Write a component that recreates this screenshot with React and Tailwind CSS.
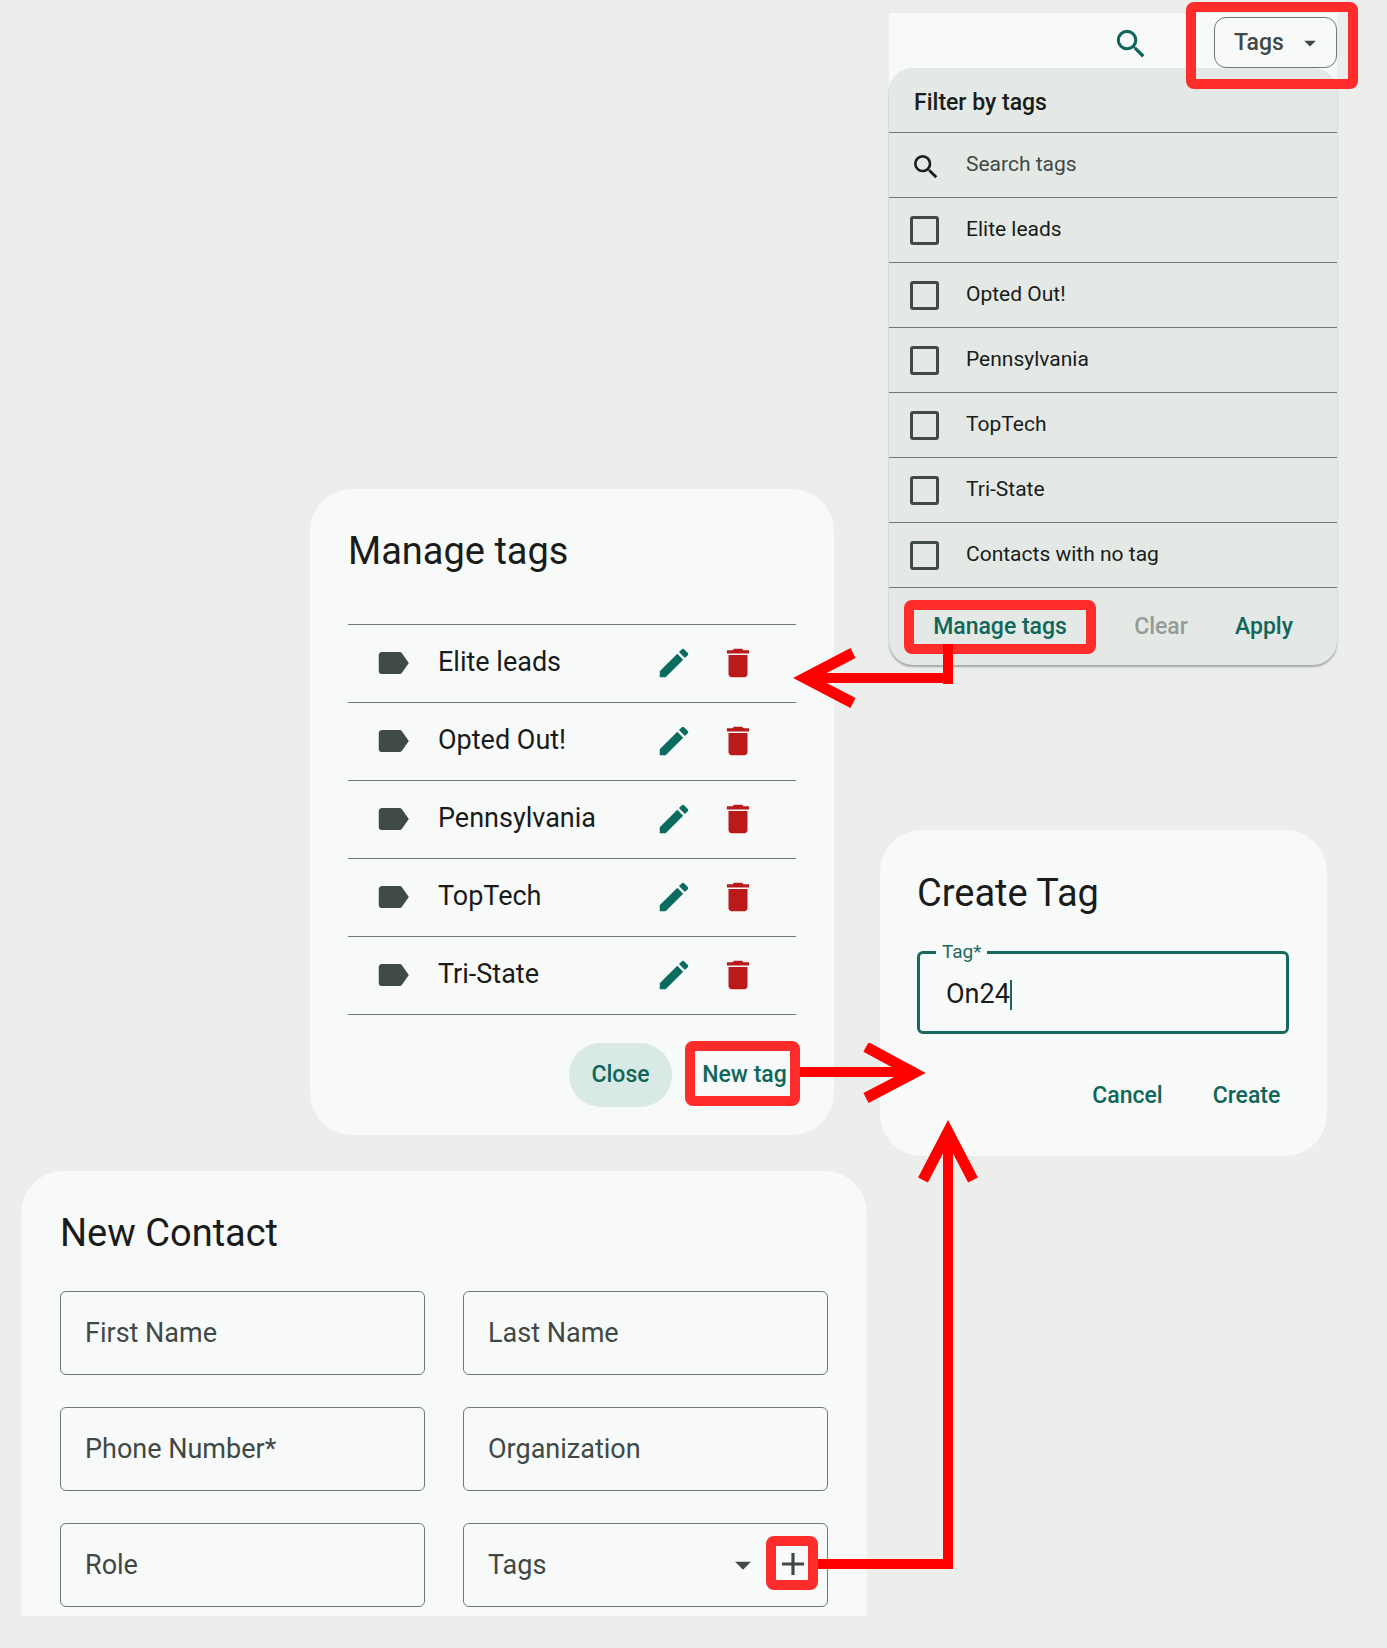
import { useState } from 'react';
import { MdAdd, MdArrowDropDown, MdDelete, MdEdit, MdLabel, MdSearch } from 'react-icons/md';

const TAGS = ['Elite leads', 'Opted Out!', 'Pennsylvania', 'TopTech', 'Tri-State'];

const Highlight = ({ className = 'inset-0' }) => (
  <span aria-hidden="true" className={`absolute pointer-events-none rounded-lg border-10 border-[#ff2c2c] ${className}`} />
);

const Arrow = ({ className, width, height, line, head }) => (
  <svg aria-hidden="true" width={width} height={height} fill="none" stroke="#ff0000" strokeMiterlimit="10" className={`absolute max-w-none pointer-events-none ${className}`}>
    <path d={line} strokeWidth="10" />
    <path d={head} strokeWidth="11" />
  </svg>
);

const TextButton = ({ children, className = '', ...props }) => (
  <button type="button" className={`relative text-[23px] leading-7 font-medium whitespace-nowrap ${className}`} {...props}>
    {children}
  </button>
);

function FilterPanel() {
  const [checked, setChecked] = useState([]);
  const toggle = (tag) =>
    setChecked((prev) => (prev.includes(tag) ? prev.filter((t) => t !== tag) : [...prev, tag]));

  return (
    <section className="ml-[9px]">
      <div className="flex items-start justify-end h-[79px] pt-1 bg-[#f8faf9]">
        <button type="button" aria-label="Search contacts" className="mt-2 mr-[64px] text-[#0f665b]">
          <MdSearch size={38} />
        </button>
        <button type="button" className="relative z-10 flex items-center justify-between w-[123px] h-[51px] pt-px pl-[19px] pr-3 text-[23px] font-medium text-[#3f4945] border border-[#6f7976] rounded-xl">
          Tags
          <MdArrowDropDown size={28} />
          <Highlight className="-left-[29px] -right-[22px] -top-4 -bottom-[22px]" />
        </button>
      </div>

      <div className="-mt-6 bg-[#e4e9e5] rounded-3xl shadow-[0_2px_2px_rgba(0,0,0,0.3)]">
        <h2 className="flex items-center h-16 pt-[7px] px-[25px] text-[23px] font-medium text-[#191c1b]">Filter by tags</h2>
        <label className="flex items-center h-[65px] pl-[21px] border-t border-[#6f7976]">
          <MdSearch size={32} className="mt-[3px] mr-6 text-[#191c1b]" />
          <input type="text" aria-label="Search tags" placeholder="Search tags" className="flex-1 min-w-0 text-[21px] text-[#191c1b] placeholder-[#3f4945] bg-transparent outline-none" />
        </label>
        {[...TAGS, 'Contacts with no tag'].map((tag) => (
          <label key={tag} className="flex items-center h-[65px] gap-[27px] pl-[21px] text-[21px] text-[#191c1b] border-t border-[#6f7976]">
            <input
              type="checkbox"
              checked={checked.includes(tag)}
              onChange={() => toggle(tag)}
              className="appearance-none size-[29px] border-3 border-[#3f4945] rounded-[3px] checked:bg-[#0f665b]"
            />
            {tag}
          </label>
        ))}
        <div className="flex items-start h-[78px] pt-3 pl-[15px] border-t border-[#6f7976]">
          <TextButton className="w-48 h-[54px] text-[#0f665b]">
            Manage tags
            <Highlight />
            <Arrow className="z-10 -left-[114px] top-10" width={166} height={70} line="M15 38H158M158 4V44" head="M63 13L15 38L63 63" />
          </TextButton>
          <TextButton disabled className="w-[130px] h-[54px] text-[#969b98]">Clear</TextButton>
          <TextButton className="w-[76px] h-[54px] text-[#0f665b]">Apply</TextButton>
        </div>
      </div>
    </section>
  );
}

function ManageTags() {
  return (
    <section className="w-full max-w-[524px] mt-[476px] px-[38px] pt-[38px] pb-7 bg-[#f8faf9] rounded-[42px]">
      <h2 className="mb-[49px] text-[38px] leading-12 text-[#191c1b]">Manage tags</h2>
      <ul className="border-b border-[#6f7976]">
        {TAGS.map((tag) => (
          <li key={tag} className="flex items-center h-[78px] pb-[2px] pl-[26px] pr-[39px] border-t border-[#6f7976]">
            <MdLabel size={38} className="text-[#3f4945]" />
            <span className="flex-1 pl-[26px] text-[27px] text-[#191c1b]">{tag}</span>
            <button type="button" aria-label={`Edit ${tag}`} className="text-[#0a6b5e]">
              <MdEdit size={38} />
            </button>
            <button type="button" aria-label={`Delete ${tag}`} className="ml-[26px] text-[#ba1a1a]">
              <MdDelete size={38} />
            </button>
          </li>
        ))}
      </ul>
      <div className="flex justify-end gap-[13px] mt-7 -mr-1">
        <TextButton className="w-[103px] h-16 text-[#0f665b] bg-[#d9e9e5] rounded-full">Close</TextButton>
        <TextButton className="w-[115px] h-16 pl-1 text-[#0f665b]">
          New tag
          <Highlight className="inset-x-0 -top-[2px] bottom-px" />
          <Arrow className="z-10 left-full top-0" width={130} height={65} line="M0 29H116" head="M66 4L114 30L66 55" />
        </TextButton>
      </div>
    </section>
  );
}

function CreateTag() {
  const [name, setName] = useState('On24');

  return (
    <section className="mt-[165px] mr-[10px] pl-[37px] pr-[38px] pt-[39px] pb-7 bg-[#f8faf9] rounded-[42px]">
      <h2 className="text-[38px] leading-12 text-[#191c1b]">Create Tag</h2>
      <fieldset className="mt-6 px-4 border-3 border-[#17695f] rounded-md">
        <legend className="px-[6px] text-[19px] leading-[22px] text-[#17695f]">
          <label htmlFor="tag-name">Tag*</label>
        </legend>
        <div className="flex items-center h-[68px] pb-[5px] pl-[10px]">
          <input
            id="tag-name"
            type="text"
            value={name}
            onChange={(e) => setName(e.target.value)}
            className="field-sizing-content text-[27px] text-[#191c1b] bg-transparent outline-none"
          />
          <span aria-hidden="true" className="w-[2px] h-[30px] bg-[#17695f]" />
        </div>
      </fieldset>
      <div className="flex justify-end gap-4 mt-[30px] -mr-[9px]">
        <TextButton className="w-[103px] h-16 text-[#0f665b]">Cancel</TextButton>
        <TextButton className="w-[103px] h-16 text-[#0f665b]">Create</TextButton>
      </div>
    </section>
  );
}

const Field = ({ label }) => (
  <input
    type="text"
    aria-label={label}
    placeholder={label}
    className="w-full h-[84px] px-6 text-[27px] text-[#191c1b] placeholder-[#3f4945] bg-transparent border border-[#6f7976] rounded-md outline-none"
  />
);

function NewContact() {
  return (
    <section className="w-full max-w-[846px] mt-[15px] px-[39px] pt-[38px] pb-[9px] bg-[#f8faf9] rounded-t-[42px]">
      <h2 className="mb-[34px] text-[38px] leading-12 text-[#191c1b]">New Contact</h2>
      <form className="grid grid-cols-2 gap-x-[38px] gap-y-8">
        <Field label="First Name" />
        <Field label="Last Name" />
        <Field label="Phone Number*" />
        <Field label="Organization" />
        <Field label="Role" />
        <div className="flex items-center h-[84px] pr-[9px] text-[#3f4945] border border-[#6f7976] rounded-md">
          <select aria-label="Tags" defaultValue="" className="appearance-none flex-1 min-w-0 h-full pl-6 text-[27px] bg-transparent outline-none">
            <option value="">Tags</option>
            {TAGS.map((tag) => (
              <option key={tag}>{tag}</option>
            ))}
          </select>
          <MdArrowDropDown size={38} className="mr-1 pointer-events-none" />
          <button type="button" aria-label="Add tag" className="relative flex items-center justify-center w-[52px] h-[54px] mb-1 pt-[2px] pl-[2px]">
            <MdAdd size={38} />
            <Highlight />
            <Arrow className="z-10 left-full -top-[420px]" width={162} height={456} line="M0 448H135M130 453V25" head="M105 64L130 16L155 64" />
          </button>
        </div>
      </form>
    </section>
  );
}

export default function App() {
  return (
    <main className="min-h-screen pt-[13px] pb-8 pl-[21px] pr-[50px] bg-[#ebeeeb] font-[Roboto,sans-serif]">
      <div className="flex items-start justify-end gap-[46px]">
        <ManageTags />
        <div className="w-full max-w-[457px]">
          <FilterPanel />
          <CreateTag />
        </div>
      </div>
      <NewContact />
    </main>
  );
}
